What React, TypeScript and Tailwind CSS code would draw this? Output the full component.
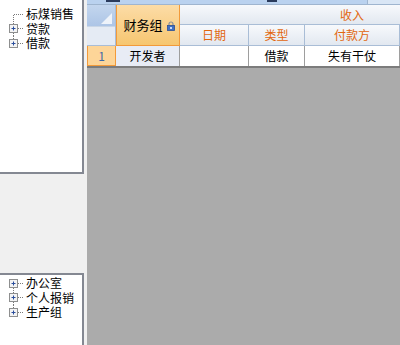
import React from 'react';

const FONT = { fontFamily: '"Noto Sans CJK SC", "Noto Sans", sans-serif' };

type Kind = 'leaf-first' | 'plus-mid' | 'plus-last' | 'plus-first';

const PlusBox = () => (
  <g>
    <rect x="9.5" y="3.5" width="8" height="8" fill="#f4f4f4" stroke="#8e8f8f" />
    <path d="M11.5 7.5h4M13.5 5.5v4" stroke="#2a4e9c" strokeWidth="1" />
  </g>
);

const Connector = ({ kind }: { kind: Kind }) => (
  <svg width="24" height="15" viewBox="0 0 24 15" className="shrink-0">
    {kind === 'leaf-first' && (
      <>
        <path d="M14 7.5h10" stroke="#7a7a7a" strokeDasharray="1 1" />
        <path d="M13.5 8v7" stroke="#7a7a7a" strokeDasharray="1 1" />
      </>
    )}
    {kind !== 'leaf-first' && (
      <>
        <path d="M18 7.5h6" stroke="#7a7a7a" strokeDasharray="1 1" />
        {(kind === 'plus-mid' || kind === 'plus-last') && (
          <path d="M13.5 0v3" stroke="#7a7a7a" strokeDasharray="1 1" />
        )}
        {(kind === 'plus-mid' || kind === 'plus-first') && (
          <path d="M13.5 12v3" stroke="#7a7a7a" strokeDasharray="1 1" />
        )}
        <PlusBox />
      </>
    )}
  </svg>
);

const TreeRow = ({ label, kind }: { label: string; kind: Kind }) => (
  <div className="flex items-center h-[14.5px]">
    <Connector kind={kind} />
    <span className="ml-[2px] text-[12px] leading-[14px] text-black whitespace-nowrap">{label}</span>
  </div>
);

const Lock = () => (
  <svg width="8" height="10" viewBox="0 0 8 10">
    <path d="M2 4.5V3a2 2 0 0 1 4 0v1.5" fill="none" stroke="#8a8f99" strokeWidth="1.2" />
    <rect x="0.5" y="4.5" width="7" height="5" fill="#3f6fc4" stroke="#2b4f94" strokeWidth="0.8" />
    <rect x="3" y="6" width="2" height="2" fill="#c9d9f4" />
  </svg>
);

const HeadCell = ({ children, className = '' }: { children?: React.ReactNode; className?: string }) => (
  <div
    className={`flex items-center justify-center bg-gradient-to-b from-[#f7f9fc] to-[#e2e8f0] border-r border-b border-[#a9bdd6] text-[12px] text-[#e2670e] ${className}`}
  >
    {children}
  </div>
);

const DataCell = ({ children, className = '' }: { children?: React.ReactNode; className?: string }) => (
  <div className={`flex items-center justify-center border-r border-[#9e9e9e] text-[12px] text-black ${className}`}>
    {children}
  </div>
);

export default function App() {
  return (
    <div className="w-[400px] h-[345px] flex bg-[#f0f0f0] overflow-hidden" style={FONT}>
      {/* left panel with two trees */}
      <div className="w-[87px] flex flex-col justify-between shrink-0">
        <div className="w-[84px] h-[174px] bg-white border-r-2 border-b-2 border-[#848892] pt-[7px]">
          <TreeRow label="标煤销售" kind="leaf-first" />
          <TreeRow label="贷款" kind="plus-mid" />
          <TreeRow label="借款" kind="plus-last" />
        </div>
        <div className="w-[84px] h-[72px] bg-white border-t-2 border-r-2 border-[#848892] pt-[1px]">
          <TreeRow label="办公室" kind="plus-first" />
          <TreeRow label="个人报销" kind="plus-mid" />
          <TreeRow label="生产组" kind="plus-last" />
        </div>
      </div>

      {/* right area */}
      <div className="flex-1 flex flex-col bg-[#ababab] overflow-hidden">
        <div className="h-[5px] flex bg-[#bad2ef] border-b border-[#9fb5cf] shrink-0">
          <div className="w-[19px]" />
          <div className="w-[14px] h-[2px] bg-[#2a3b5c]" />
          <div className="w-[147px]" />
          <div className="w-[10px] h-[2px] bg-[#2a3b5c]" />
          <div className="w-[90px]" />
          <div className="flex-1 bg-[#d9e6f5] border-l border-[#9fb5cf]" />
        </div>

        <div className="grid grid-cols-[29px_64px_69px_56px_95px_125px] grid-rows-[20px_21px_20px] w-[438px] bg-white border-b-2 border-[#7c7c7c]">
          {/* corner */}
          <div className="row-span-2 flex flex-col border-r border-b border-[#a9bdd6]">
            <div className="h-[21px] bg-gradient-to-b from-[#c3d6ee] to-[#adc5e6] flex items-end justify-end pr-[3px] pb-[2px]">
              <svg width="11" height="11" viewBox="0 0 11 11">
                <path d="M11 0V11H0Z" fill="#eef3fa" />
              </svg>
            </div>
            <div className="flex-1 bg-[#e5ebf4] border-t border-[#c9d6e6]" />
          </div>

          {/* 财务组 */}
          <div className="row-span-2 relative flex items-center justify-center bg-gradient-to-b from-[#fcdca6] to-[#f6c670] border-x border-b border-[#f29a3a] text-[13px] text-black">
            <span className="mr-[10px]">财务组</span>
            <span className="absolute right-[4px] top-[16px]">
              <Lock />
            </span>
          </div>

          <HeadCell className="col-span-4">收入</HeadCell>
          <HeadCell>日期</HeadCell>
          <HeadCell>类型</HeadCell>
          <HeadCell>付款方</HeadCell>
          <HeadCell />

          {/* data row */}
          <div className="flex items-center justify-center bg-[#fdd598] border border-t-0 border-[#f29a3a] text-[12px] text-[#3d68a8]">
            1
          </div>
          <DataCell className="bg-[#e8ecf5]">开发者</DataCell>
          <DataCell />
          <DataCell>借款</DataCell>
          <DataCell>失有干仗</DataCell>
          <DataCell />
        </div>
      </div>
    </div>
  );
}
